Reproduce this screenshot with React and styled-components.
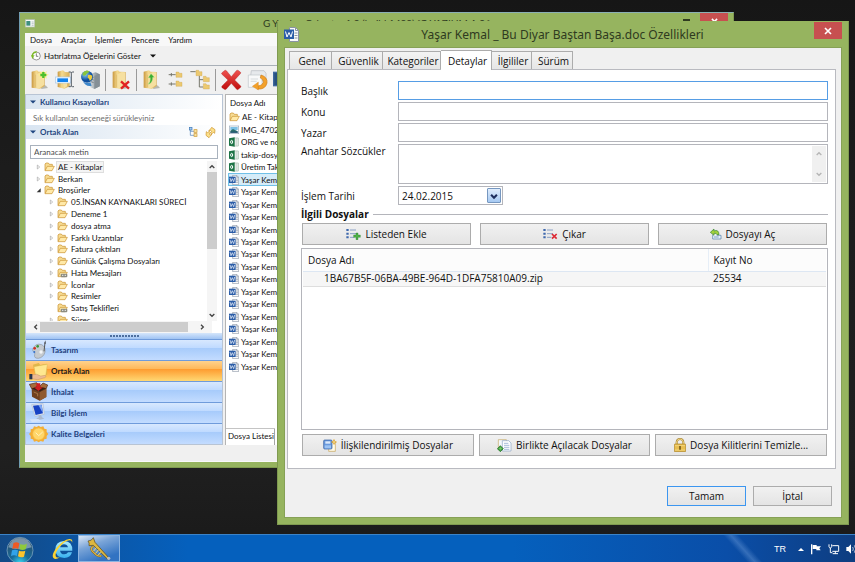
import React from "react";
import styled, { createGlobalStyle, css } from "styled-components";

const GlobalStyle = createGlobalStyle`
  * {
    box-sizing: border-box;
  }
  body {
    margin: 0;
    background: #191919;
    color: #101010;
    font: 10px/12px "Open Sans", "Noto Sans", sans-serif;
  }
  button, input, select, textarea {
    font: inherit;
    color: inherit;
    margin: 0;
  }
  ul {
    list-style: none;
    margin: 0;
    padding: 0;
  }
  svg {
    display: block;
    flex: none;
  }
`;

/* ---------- icons ---------- */

const Folder = ({ shared }) => (
  <svg width="11" height="10" viewBox="0 0 33 30">
    <path d="M3 25V6l3-3h7l3 4h9v6" fill="#f7dc94" stroke="#c98f2c" strokeWidth="2" />
    <path d="M3 26l7-13h21l-7 13z" fill="#ffe9a8" stroke="#c98f2c" strokeWidth="2" />
    {shared && (
      <g>
        <rect x="11" y="17" width="20" height="11" rx="3" fill="#8c8c80" />
        <path d="M15 22h4m4 0h4" stroke="#eee" strokeWidth="3" />
      </g>
    )}
  </svg>
);

const WordDoc = ({ size = 10 }) => (
  <svg width={size} height={size} viewBox="0 0 30 30">
    <path d="M11 1h12l6 6v22H11z" fill="#fafafa" stroke="#8a94a3" strokeWidth="2" />
    <path d="M23 1v6h6M21 12h6M21 17h6M21 22h6" fill="none" stroke="#8a94a3" strokeWidth="2" />
    <rect x="0" y="5" width="20" height="19" fill="#2b5da8" />
    <path d="M3 9l3 11 4-9 4 9 3-11" fill="none" stroke="#fff" strokeWidth="2" />
  </svg>
);

const ExcelDoc = () => (
  <svg width="10" height="10" viewBox="0 0 30 30">
    <path d="M14 3h14v24H14z" fill="#fafafa" stroke="#9bb7a5" strokeWidth="2" />
    <path d="M16 9h12M16 15h12M16 21h12M22 3v24" stroke="#9bb7a5" strokeWidth="1" />
    <path d="M0 4l17-3v28L0 26z" fill="#1c7345" />
    <ellipse cx="8" cy="15" rx="3" ry="5" fill="none" stroke="#fff" strokeWidth="3" />
  </svg>
);

const Picture = () => (
  <svg width="10" height="10" viewBox="0 0 30 30">
    <rect x="1" y="3" width="28" height="23" fill="#fff" stroke="#9ab" strokeWidth="2" />
    <rect x="4" y="6" width="22" height="9" fill="#7ec1e6" />
    <path d="M4 17l8-5 14 7v4H4z" fill="#2c6f6c" />
    <rect x="4" y="20" width="22" height="3" fill="#1d4d70" />
  </svg>
);

const WindowGlyph = () => (
  <svg width="10" height="9" viewBox="0 0 30 27">
    <rect x="1" y="2" width="28" height="22" fill="#f7f9f7" stroke="#b4bfb0" strokeWidth="2" />
    <rect x="4" y="6" width="12" height="14" fill="#3f8f7f" />
    <path d="M20 9h6M20 14h6M20 19h6" stroke="#9aa" strokeWidth="2" />
  </svg>
);

const Clock = () => (
  <svg width="10" height="10" viewBox="0 0 30 30">
    <circle cx="16" cy="15" r="12" fill="#fff" stroke="#666" strokeWidth="2" />
    <path d="M16 7v9h6" fill="none" stroke="#444" strokeWidth="2" />
    <path d="M17 3A12 12 0 0 0 6 22" fill="none" stroke="#7dbb25" strokeWidth="4" />
    <path d="M0 13h11l-6 8z" fill="#7dbb25" />
  </svg>
);

const ToolSvg = ({ children, width = 20 }) => (
  <svg width={width} height="22" viewBox={`0 0 ${width * 3} 66`}>
    <defs>
      <linearGradient id="folderGold" x1="0" x2="1">
        <stop offset="0" stopColor="#c9983f" />
        <stop offset=".35" stopColor="#f5da90" />
        <stop offset="1" stopColor="#d9ae55" />
      </linearGradient>
      <linearGradient id="steel" x1="0" x2="1">
        <stop offset="0" stopColor="#d8dde0" />
        <stop offset="1" stopColor="#6f7a82" />
      </linearGradient>
      <radialGradient id="globe" cx=".35" cy=".3">
        <stop offset="0" stopColor="#8ed1f7" />
        <stop offset="1" stopColor="#0e4f9f" />
      </radialGradient>
      <linearGradient id="redX" x1="0" y1="0" x2="0" y2="1">
        <stop offset="0" stopColor="#ef5350" />
        <stop offset="1" stopColor="#bf0d0d" />
      </linearGradient>
    </defs>
    {children}
  </svg>
);

const StandingFolder = () => (
  <g>
    <path d="M30 42l18 8 6 7-20 3z" fill="#a9a9a0" opacity=".8" />
    <path d="M5 8l16-4 5 4 18 1v42l-14 8-25-3z" fill="url(#folderGold)" />
    <path d="M17 17l15-8 10 1v38l-16 11-9-5z" fill="#f6e0a0" />
    <path d="M17 17v38" stroke="#d9b25c" strokeWidth="2" />
  </g>
);

const NewFolder = () => (
  <ToolSvg>
    <StandingFolder />
    <path
      d="M40 4l3 7 8-5-3 8 9 3-9 4 3 8-8-4-3 8-4-8-8 4 4-8-8-4 8-3-4-8 8 5z"
      fill="#fdf086"
    />
    <path d="M40 9v18M31 18h18" stroke="#4cbf2f" strokeWidth="7" />
  </ToolSvg>
);

const Rename = () => (
  <ToolSvg>
    <path d="M8 8l16-4 6 5 14 1v42l-16 7-20-5z" fill="url(#folderGold)" />
    <path d="M24 40l12-2v14l-10 7z" fill="#f6e0a0" />
    <rect x="1" y="24" width="46" height="18" fill="#f4f9ff" stroke="#a9c8e8" strokeWidth="2" />
    <rect x="7" y="28" width="32" height="11" fill="#1283ef" />
    <path
      d="M41 9h5q3 0 3 4v36q0 4 3 4h5M57 9h-4q-4 0-4 4M41 53h5q3 0 3-4"
      fill="none"
      stroke="#555d66"
      strokeWidth="3"
    />
  </ToolSvg>
);

const GlobeServer = () => (
  <ToolSvg>
    <path d="M30 14l17-4 12 6v36l-16 8-13-6z" fill="url(#steel)" />
    <path d="M43 20l16-4v36l-16 8z" fill="#858f96" />
    <path d="M33 22l8 3M33 30l8 3M33 38l8 3" stroke="#59636b" strokeWidth="2" />
    <circle cx="21" cy="23" r="18" fill="url(#globe)" />
    <path d="M8 12q9-12 20-5-2 6-8 7-3 9-12 5z" fill="#88c43d" />
    <path d="M24 18q9-2 13 3-1 13-8 14-1-7-6-9z" fill="#eccb3d" />
    <path d="M8 36q10 10 23 4l4 10q-17 5-27-14z" fill="#3d86ca" />
  </ToolSvg>
);

const FolderDelete = () => (
  <ToolSvg>
    <StandingFolder />
    <path d="M30 37l24 22M54 37L30 59" stroke="#e12222" strokeWidth="7" />
  </ToolSvg>
);

const FolderMove = () => (
  <ToolSvg>
    <StandingFolder />
    <path
      d="M18 46q8-6 7-20h-6l8-12 10 11h-5q0 18-14 21z"
      fill="#3cae32"
      stroke="#a5e58c"
      strokeWidth="1"
    />
  </ToolSvg>
);

const MiniNode = ({ x, y }) => (
  <path d={`M${x} ${y}h8l2 4h8v12h-18z`} fill="#ecc970" stroke="#c79d45" strokeWidth="1" />
);

const ExpandTree = () => (
  <ToolSvg width={17}>
    <path d="M5 17h21M5 45h21" stroke="#77776c" strokeWidth="3" />
    <path d="M13 12v10M13 40v10" stroke="#77776c" strokeWidth="3" />
    <MiniNode x={27} y={9} />
    <MiniNode x={27} y={36} />
  </ToolSvg>
);

const CollapseTree = () => (
  <ToolSvg width={21}>
    <path d="M4 8h16M31 20v34h12M31 32h12" stroke="#77776c" fill="none" strokeWidth="3" />
    <MiniNode x={21} y={4} />
    <MiniNode x={43} y={22} />
    <MiniNode x={43} y={44} />
  </ToolSvg>
);

const RedX = () => (
  <ToolSvg width={21}>
    <path
      d="M3 11l9-7q3-1 5 2l14 17L46 5q3-2 5-1l7 5q3 3 0 5L41 33l18 18q2 3 0 4l-7 6q-3 2-5 0L31 43 16 60q-3 3-6 1l-7-5q-2-2 0-5l18-18L2 15q-1-2 1-4z"
      fill="url(#redX)"
      stroke="#a51212"
    />
  </ToolSvg>
);

const Restore = () => (
  <ToolSvg width={21}>
    <path d="M13 5h38l6 8v22H9z" fill="#e6e9ec" stroke="#b5bac0" strokeWidth="2" />
    <path d="M4 18h36l5 8v29H4z" fill="#f8f9fa" stroke="#bfc5ca" strokeWidth="2" />
    <path d="M11 30h22M11 37h18" stroke="#c5cbd0" strokeWidth="2" />
    <path
      d="M42 18q20 6 18 24-5 20-28 18v-9q14 0 17-11 1-9-9-13z"
      fill="#f3a12b"
      stroke="#cf7a12"
      strokeWidth="2"
    />
    <path d="M16 52l18-13v24z" fill="#f3a12b" stroke="#cf7a12" strokeWidth="1" />
  </ToolSvg>
);

const BlueStrip = () => (
  <ToolSvg width={15}>
    <rect x="0" y="8" width="45" height="44" fill="#3d679e" />
    <rect x="4" y="12" width="37" height="36" fill="#27507f" />
  </ToolSvg>
);

const Twisty = ({ open, empty }) => (
  <svg width="6" height="8" viewBox="0 0 18 24">
    {!empty &&
      (open ? (
        <path d="M14 7v12H2z" fill="#333" />
      ) : (
        <path d="M4 6l7 6-7 6z" fill="#fff" stroke="#a5a5a5" strokeWidth="2" />
      ))}
  </svg>
);

const Triangle = ({ width = 6, up }) => (
  <svg width={width} height="4" viewBox="0 0 12 8">
    <path d={up ? "M0 8l6-6 6 6z" : "M0 1h12l-6 6z"} fill="currentColor" />
  </svg>
);

const turns = { up: 0, right: 90, down: 180, left: 270 };

const Chevron = ({ to, color = "#444", size = 8, weight = 4 }) => (
  <svg width={size} height={size} viewBox="0 0 24 24">
    <path
      d="M5 15l7-7 7 7"
      fill="none"
      stroke={color}
      strokeWidth={weight}
      transform={`rotate(${turns[to]} 12 12)`}
    />
  </svg>
);

const TreeIcon = () => (
  <svg width="9" height="10" viewBox="0 0 27 30">
    <path d="M4 8v17h11M4 13h11" fill="none" stroke="#4c7fb8" strokeWidth="2" />
    <rect x="1" y="1" width="8" height="8" fill="#a7cbef" stroke="#3b76b5" strokeWidth="2" />
    <rect x="15" y="8" width="9" height="8" fill="#f7e0a0" stroke="#cb952d" strokeWidth="2" />
    <rect x="15" y="20" width="9" height="8" fill="#f7e0a0" stroke="#cb952d" strokeWidth="2" />
  </svg>
);

const SyncIcon = () => (
  <svg width="11" height="11" viewBox="0 0 33 33">
    <path d="M11 12l7-8 2-3 10 7-1 11-4-3-5 5-3-4 3-4-3-3z" fill="#fbe08b" stroke="#cb8f22" strokeWidth="2" />
    <path d="M21 22l-7 7-2 3-9-7 1-11 4 3 5-4 3 4-3 4 3 3z" fill="#fbe08b" stroke="#cb8f22" strokeWidth="2" />
  </svg>
);

const Palette = () => (
  <svg width="20" height="20" viewBox="0 0 60 60">
    <path
      d="M12 26Q20 8 38 14q12 6 10 22-4 16-20 19-14 0-11-11 3-6-4-9-3-3-1-9z"
      fill="#c5cacf"
      stroke="#8f969c"
      strokeWidth="2"
    />
    <circle cx="17" cy="25" r="4" fill="#cf2e24" />
    <circle cx="26" cy="19" r="4" fill="#34983a" />
    <circle cx="16" cy="36" r="3" fill="#3371cc" />
    <circle cx="36" cy="36" r="5" fill="#f3f5f7" />
    <path d="M45 34l3-26" stroke="#555" strokeWidth="3" />
    <path d="M46 10l3-9 1 10z" fill="#222" />
  </svg>
);

const HandFolder = () => (
  <svg width="20" height="20" viewBox="0 0 60 60">
    <path d="M12 11l17-5 5 6 19-4 2 33-35 7z" fill="#e0b74b" />
    <path d="M15 17l40-7-5 34-29 6z" fill="#ffe88f" stroke="#d5ac40" strokeWidth="1" />
    <path
      d="M8 42q16-6 27 3l14-2q5 4-2 7l-21 6-18-3z"
      fill="#edbb92"
      stroke="#b47b50"
      strokeWidth="1"
    />
    <path d="M1 39h9v16H1z" fill="#28364e" />
  </svg>
);

const OpenBox = () => (
  <svg width="20" height="20" viewBox="0 0 60 60">
    <path d="M8 20l24 9v27L9 44zM32 29l20-10v26L32 56z" fill="#704120" />
    <path d="M32 29l20-10v26L32 56z" fill="#8f5a30" />
    <path
      d="M8 20L1 7l22-5 9 11 10-10 14 6-4 10-20 10z"
      fill="#a56b3a"
      stroke="#4c2a15"
      strokeWidth="2"
    />
    <path d="M8 20l17-8 27 7-20 10z" fill="#3c2113" />
    <path d="M22 4h12v12h8L28 27 15 16h7z" fill="#cf2020" />
    <path d="M14 30l12 5v8" fill="none" stroke="#c28f5c" strokeWidth="2" />
  </svg>
);

const Monitor = () => (
  <svg width="20" height="20" viewBox="0 0 60 60">
    <path d="M8 5l34-4 4 33-28 6z" fill="#e1e7ef" stroke="#b4c0d0" strokeWidth="2" />
    <path d="M12 8l26-3 4 26-22 5z" fill="#1742c4" />
    <path d="M28 6l10-1 4 26z" fill="#7fa8f4" />
    <path d="M28 38l8-2 3 7 7 4-18 4-6-5 8-3z" fill="#aab9ce" />
    <path d="M2 49l26-1 10 7-29 3z" fill="#d5e4fa" />
  </svg>
);

const Seal = () => (
  <svg width="20" height="20" viewBox="0 0 60 60">
    <path
      d="M29 5l6 4 8-2 3 7 7 2v8l5 6-5 6v8l-7 2-3 7-8-2-6 4-6-4-8 2-3-7-7-2v-8l-5-6 5-6v-8l7-2 3-7 8 2z"
      fill="#f3ae35"
    />
    <circle cx="29" cy="30" r="18" fill="#ffd76a" stroke="#f5bb45" strokeWidth="2" />
    <path d="M20 26l9 9 12-11" fill="none" stroke="#fff0bd" strokeWidth="3" />
  </svg>
);

const ListIcon = ({ kind }) => (
  <svg width="15" height="12" viewBox="0 0 45 36">
    <path d="M1 6h7M1 17h7M1 28h7" stroke="#3f69ad" strokeWidth="6" />
    <path d="M12 6h18M12 17h18M12 28h13" stroke="#8aa0c4" strokeWidth="3" />
    {kind === "add" ? (
      <path
        d="M30 15h6v6h7v7h-7v7h-6v-7h-7v-7h7z"
        fill="#4eb045"
        stroke="#1d7324"
        strokeWidth="1"
      />
    ) : (
      <path d="M27 18l14 14M41 18L27 32" stroke="#dd2a35" strokeWidth="5" />
    )}
  </svg>
);

const OpenFileIcon = () => (
  <svg width="12" height="12" viewBox="0 0 36 36">
    <path d="M8 20v13h25V22H20" fill="#e6f0fb" stroke="#4c79a8" strokeWidth="2" />
    <path d="M12 27h14" stroke="#4c79a8" strokeWidth="2" />
    <path d="M1 13L12 3v6q14-6 15 11h-6q-2-6-9-4v6z" fill="#a2d13c" stroke="#348232" strokeWidth="2" />
  </svg>
);

const RelatedIcon = () => (
  <svg width="14" height="13" viewBox="0 0 42 39">
    <path d="M19 10h18v27H17z" fill="#fffbe9" stroke="#c6a052" strokeWidth="2" />
    <rect x="2" y="3" width="25" height="27" rx="3" fill="#6b9ade" stroke="#2f5b9d" strokeWidth="2" />
    <rect x="7" y="7" width="15" height="7" fill="#dce9fa" />
    <rect x="5" y="19" width="19" height="9" fill="#9cc3f3" />
    <path d="M33 1v16M25 9h16" stroke="#e1a72c" strokeWidth="3" />
    <circle cx="33" cy="9" r="4" fill="#fff2b0" stroke="#d29420" strokeWidth="2" />
  </svg>
);

const TogetherIcon = () => (
  <svg width="15" height="13" viewBox="0 0 45 39">
    <path d="M4 2h24v29H4z" fill="#f4f7fb" stroke="#c4a860" strokeWidth="2" />
    <path d="M16 5h19l7 7v24H16z" fill="#fdfeff" stroke="#8da5c4" strokeWidth="2" />
    <path d="M21 13h13M21 19h16M21 25h16M21 31h16" stroke="#7e9cc7" strokeWidth="2" />
    <path d="M10 20l9 9-9 9-9-9z" fill="#3b9c39" stroke="#1c6a26" strokeWidth="2" />
    <path d="M10 24v10M5 29h10" stroke="#8ed37a" strokeWidth="2" />
  </svg>
);

const LockIcon = () => (
  <svg width="12" height="14" viewBox="0 0 36 42">
    <path d="M8 20v-8q1-9 10-9t10 9v8" fill="none" stroke="#a88434" strokeWidth="6" />
    <path d="M8 20v-8q1-9 10-9t10 9v8" fill="none" stroke="#efd684" strokeWidth="3" />
    <rect x="1" y="18" width="34" height="23" rx="2" fill="#e8bf50" stroke="#a77c20" strokeWidth="2" />
    <path d="M3 23h30M3 36h30" stroke="#f7e096" strokeWidth="2" />
    <path d="M18 24v11" stroke="#59410f" strokeWidth="4" />
  </svg>
);

const StartOrb = () => (
  <svg width="28" height="28" viewBox="0 0 84 84">
    <defs>
      <radialGradient id="orb" cx=".5" cy="1" r=".9">
        <stop offset="0" stopColor="#3ddcf5" />
        <stop offset=".4" stopColor="#166d9c" />
        <stop offset="1" stopColor="#2a4f6d" />
      </radialGradient>
    </defs>
    <circle cx="42" cy="43" r="39" fill="url(#orb)" stroke="#8cb2cb" strokeWidth="2" />
    <path d="M7 34Q15 6 42 6t35 28Q42 46 7 34z" fill="#c9d6df" opacity=".5" />
    <path d="M22 22q9-6 18 0l-3 17q-9-4-18 0z" fill="#ee5a24" />
    <path d="M43 24q9 5 20-1l-4 17q-9 4-19 0z" fill="#8fc93a" />
    <path d="M18 43q9-4 18 0l-3 17q-9-5-18 0z" fill="#32a3e8" />
    <path d="M39 44q10 4 19 0l-4 18q-9 4-18-1z" fill="#fcc42c" />
  </svg>
);

const ExplorerLogo = () => (
  <svg width="24" height="24" viewBox="0 0 72 72">
    <defs>
      <linearGradient id="ie" x1="0" y1="0" x2="0" y2="1">
        <stop offset="0" stopColor="#aeeaff" />
        <stop offset="1" stopColor="#37b1ef" />
      </linearGradient>
    </defs>
    <path
      d="M64 41H27q2 11 13 11 8 0 11-6h12q-5 17-23 17-27-1-27-26 1-24 26-25 26 1 25 29zM27 31h24q-2-9-12-9t-12 9z"
      fill="url(#ie)"
    />
    <path
      d="M63 18q4-13-8-12Q37 8 18 31-1 55 8 64q6 5 20-4-9 3-12 0-7-8 8-28Q43 10 56 10q7 0 7 8z"
      fill="#fbd232"
    />
  </svg>
);

const Trumpet = () => (
  <svg width="24" height="24" viewBox="0 0 72 72">
    <path
      d="M3 12Q14 12 19 2l5 14 42 47-4 4L19 25 6 26q2-8-3-14z"
      fill="#dcb741"
      stroke="#574414"
      strokeWidth="2"
    />
    <path
      d="M20 28q-12 4-4 15l12 11q9 6 15 2"
      fill="none"
      stroke="#6b5318"
      strokeWidth="6"
    />
    <path
      d="M20 28q-12 4-4 15l12 11q9 6 15 2"
      fill="none"
      stroke="#d8b043"
      strokeWidth="4"
    />
    <path d="M28 32l-8 10M34 39l-8 10M41 46l-8 9" stroke="#f0d878" strokeWidth="3" />
    <circle cx="65" cy="64" r="5" fill="#b7bcc4" />
  </svg>
);

const TrayFlag = () => (
  <svg width="12" height="12" viewBox="0 0 36 36">
    <path d="M5 4v30" stroke="#fff" strokeWidth="4" />
    <path d="M8 6h12v4h13l-5 6 4 6H19v-4H8z" fill="#fff" />
  </svg>
);

const TrayNetwork = () => (
  <svg width="12" height="12" viewBox="0 0 36 36">
    <path d="M13 8h19v17H13" fill="none" stroke="#fff" strokeWidth="3" />
    <path d="M22 25v7M14 32h16" stroke="#fff" strokeWidth="3" />
    <path d="M3 4v7q1 4 4 4t4-4V4M7 15v14h6" fill="none" stroke="#fff" strokeWidth="3" />
  </svg>
);

const TraySound = () => (
  <svg width="12" height="12" viewBox="0 0 36 36">
    <path d="M1 12h6l8-8v28l-8-8H1z" fill="#fff" />
    <path d="M20 12q4 6 0 12M25 7q8 11 0 22" fill="none" stroke="#fff" strokeWidth="2" />
  </svg>
);

const CloseGlyph = ({ size = 8 }) => (
  <svg width={size} height={size} viewBox="0 0 24 24">
    <path d="M3 3l18 18M21 3L3 21" stroke="#fff" strokeWidth="5" />
  </svg>
);

/* ---------- desktop and windows ---------- */

const Desktop = styled.div`
  position: relative;
  min-height: 100vh;
  overflow: hidden;
  display: flex;
  flex-direction: column;
  justify-content: flex-end;
  background: linear-gradient(#161616, #1c1c1c 30%, #202020 80%, #191919);
`;

const Window = styled.section`
  position: absolute;
  background: #96b45f;
  border: 1px solid #7f9a50;
  display: flex;
  flex-direction: column;
`;

const ExplorerWindow = styled(Window)`
  top: 12px;
  left: 19px;
  right: 121px;
  padding: 0 5px 5px;
  border-color: #8bb0b4 #7f9a50 #7f9a50 #6f9bb0;
  font-family: Lato, "Open Sans", sans-serif;
`;

const PropertiesWindow = styled(Window)`
  top: 21px;
  left: 277px;
  right: 6px;
  padding: 0 6px 6px;
  border-top-color: #96b45f;
`;

const TitleBar = styled.header`
  display: flex;
  align-items: center;
  height: ${(p) => p.$height}px;
  color: #2f3b20;
`;

const Title = styled.h1`
  flex: 1;
  margin: 0;
  padding-left: ${(p) => p.$shift || 0}px;
  text-align: center;
  white-space: nowrap;
  font-size: ${(p) => p.$size}px;
  line-height: 16px;
  font-weight: 400;
`;

const PropertiesTitle = styled(Title)`
  font-family: "Noto Sans", sans-serif;
`;

const CaptionButton = styled.button`
  width: 28px;
  height: 17px;
  padding: 0;
  border: 0;
  align-self: flex-start;
  display: grid;
  place-items: center;
  background: ${(p) => (p.$close ? "#c75050" : "transparent")};
`;

const MaxGlyph = styled.span`
  width: 7px;
  height: 6px;
  border: 1px solid #2f3b20;
  border-top-width: 2px;
`;

/* ---------- explorer ---------- */

const ExplorerBody = styled.div`
  background: #f0f0f0;
  font-size: 8px;
`;

const MenuBar = styled.nav`
  display: flex;
  gap: 9px;
  height: 13px;
  padding-left: 5px;
  background: #f8f8f8;
`;

const MenuItem = styled.button`
  padding: 0;
  border: 0;
  background: none;
`;

const ReminderBar = styled.div`
  display: flex;
  align-items: center;
  height: 20px;
  padding-left: 6px;
  border-bottom: 1px solid #a9b0b8;
  background: #f0f0f0;
`;

const ReminderButton = styled.button`
  display: flex;
  align-items: center;
  gap: 3px;
  padding: 0;
  border: 0;
  background: none;
  & > :last-child {
    margin-left: 6px;
  }
`;

const ToolBar = styled.div`
  display: flex;
  align-items: center;
  gap: 5px;
  height: 28px;
  padding-left: 5px;
`;

const Tool = styled.button`
  padding: 0;
  border: 0;
  background: none;
`;

const Divider = styled.span`
  width: 1px;
  height: 22px;
  background: #9a9a9a;
`;

const Split = styled.div`
  display: flex;
  gap: 2px;
  height: 351px;
`;

const Side = styled.div`
  display: flex;
  flex-direction: column;
  width: 198px;
  background: #fff;
  border: 1px solid #b8c4d4;
`;

const SectionHead = styled.h2`
  display: flex;
  align-items: center;
  gap: 4px;
  height: 14px;
  margin: 0;
  padding: 0 6px 0 4px;
  font-size: 8px;
  line-height: 14px;
  color: #1f4680;
  background: linear-gradient(90deg, #d9e5f1, #fff);
  & > svg:nth-of-type(2) {
    margin-left: auto;
  }
  & > svg:nth-of-type(3) {
    margin-left: 3px;
  }
`;

const Hint = styled.p`
  margin: 0;
  padding: 3px 7px 1px;
  height: 16px;
  line-height: 12px;
  color: #6d6d6d;
`;

const Search = styled.input`
  height: 14px;
  margin: 6px 4px 2px;
  padding: 0 3px;
  border: 1px solid #a9b2bd;
  outline: 0;
  &::placeholder {
    color: #4e4e4e;
    opacity: 1;
  }
`;

const TreeBox = styled.div`
  display: flex;
  height: 161px;
  overflow: hidden;
`;

const Tree = styled.ul`
  flex: 1;
  display: grid;
  grid-auto-rows: 1fr;
  height: 165px;
`;

const TreeItem = styled.li`
  display: flex;
  align-items: center;
  gap: 2px;
  padding-left: ${(p) => 10 + p.$level * 13}px;
  white-space: nowrap;
`;

const TreeLabel = styled.span`
  padding: 0 1px;
  line-height: 10px;
  ${(p) =>
    p.$selected &&
    css`
      background: #f4f4f4;
      outline: 1px solid #dedede;
    `}
`;

const ScrollTrack = styled.div`
  display: flex;
  flex-direction: ${(p) => (p.$across ? "row" : "column")};
  align-items: center;
  justify-content: space-between;
  flex: none;
  background: #f5f5f5;
  ${(p) =>
    p.$across
      ? "height: 12px; margin-right: 10px; padding: 0 6px;"
      : "width: 10px; margin-right: 5px; padding: 2px 0;"}
`;

const Thumb = styled.span`
  background: #cdcdcd;
  ${(p) =>
    p.$across
      ? "width: 148px; height: 10px; margin-right: auto;"
      : "height: 77px; width: 10px; margin: 1px 0 auto;"}
`;

const Grip = styled.div`
  display: grid;
  place-items: center;
  height: 6px;
  background: linear-gradient(#d5e6fb, #9fc3f3);
  &::after {
    content: "";
    width: 29px;
    height: 2px;
    background: repeating-linear-gradient(90deg, #4d6f9f 0 2px, transparent 2px 3px);
  }
`;

const NavButton = styled.button`
  display: flex;
  align-items: center;
  gap: 2px;
  height: 21px;
  padding: 0 3px;
  border: 0;
  border-top: 1px solid #6f9bdb;
  font-weight: 700;
  text-align: left;
  color: ${(p) => (p.$active ? "#1a1a1a" : "#1f3f7d")};
  background: ${(p) =>
    p.$active
      ? "linear-gradient(#ffd28c, #ffb858 40%, #fe9d31 42%, #ffd873)"
      : "linear-gradient(#d8e8fe, #bfdaff 40%, #a7cbfb 42%, #c3dcff)"};
`;

const Listing = styled.div`
  flex: 1;
  display: flex;
  flex-direction: column;
  min-width: 0;
  border-left: 1px solid #b4b4b4;
  border-top: 1px solid #b4b4b4;
  background: #fff;
`;

const ListingHead = styled.h2`
  margin: 0;
  padding: 0 4px;
  height: 16px;
  font-size: 8px;
  line-height: 17px;
  font-weight: 400;
`;

const Files = styled.ul`
  display: grid;
  grid-auto-rows: 1fr;
  height: 262px;
  padding-left: 2px;
`;

const File = styled.li`
  display: flex;
  align-items: center;
  gap: 2px;
  padding-left: 1px;
  white-space: nowrap;
  ${(p) =>
    p.$selected &&
    css`
      background: #d5ecf9;
      outline: 1px solid #70c0e7;
      outline-offset: -1px;
    `}
`;

const ListingTab = styled.div`
  margin-top: auto;
  height: 16px;
  width: 49px;
  padding: 0 2px;
  line-height: 15px;
  white-space: nowrap;
  border-right: 1px solid #a5a5a5;
  box-shadow: 0 -1px 0 #c4c4c4;
`;

const StatusBar = styled.footer`
  height: 17px;
  border-bottom: 1px solid #fafafa;
`;

/* ---------- properties dialog ---------- */

const Sheet = styled.div`
  display: flex;
  flex-direction: column;
  padding: 2px 5px 11px 2px;
  background: #f0f0f0;
  border: 1px solid #86a156;
`;

const Tabs = styled.div`
  display: flex;
  align-items: flex-end;
  padding-left: 2px;
`;

const Tab = styled.button`
  position: relative;
  height: ${(p) => (p.$active ? 20 : 18)}px;
  width: ${(p) => p.$width}px;
  margin-bottom: ${(p) => (p.$active ? "-1px" : "0")};
  padding: 0 0 0 3px;
  white-space: nowrap;
  border: 1px solid #acacac;
  border-width: 1px 1px 0 ${(p) => (p.$first ? "1px" : 0)};
  background: ${(p) => (p.$active ? "#fff" : "linear-gradient(#f3f3f3, #e6e6e6)")};
`;

const TabPanel = styled.form`
  display: flex;
  flex-direction: column;
  padding: 11px 7px 12px 13px;
  background: #fff;
  border: 1px solid #b9bac0;
`;

const Fields = styled.div`
  display: grid;
  grid-template-columns: 97px 1fr;
  gap: 2px 0;
`;

const Label = styled.label`
  line-height: 12px;
  padding-top: ${(p) => (p.$top ? 1 : 4)}px;
`;

const boxed = css`
  border: 1px solid #b4b5bb;
  background: #fff;
  outline: 0;
`;

const Input = styled.input`
  ${boxed}
  height: 19px;
  padding: 0 4px;
  &:focus {
    border-color: #569de5;
  }
`;

const TextBox = styled.div`
  ${boxed}
  display: flex;
  height: 40px;
  padding: 1px;
`;

const TextArea = styled.textarea`
  flex: 1;
  border: 0;
  outline: 0;
  resize: none;
`;

const TextScroll = styled.div`
  display: flex;
  flex-direction: column;
  justify-content: space-between;
  padding: 4px 3px;
  background: #f0f0f0;
`;

const DateBox = styled.div`
  ${boxed}
  display: flex;
  align-items: center;
  width: 105px;
  height: 19px;
  padding: 1px;
`;

const DateSelect = styled.select`
  flex: 1;
  appearance: none;
  border: 0;
  padding: 0 2px;
  outline: 0;
  background: none;
`;

const DropArrow = styled.span`
  display: grid;
  place-items: center;
  width: 14px;
  height: 15px;
  border: 1px solid #7697c0;
  border-radius: 1px;
  background: linear-gradient(#e0edfc, #a6c9f2);
`;

const GroupTitle = styled.h2`
  display: flex;
  align-items: center;
  gap: 4px;
  margin: 3px 0 2px;
  font-size: 10px;
  line-height: 13px;
  &::after {
    content: "";
    flex: 1;
    height: 1px;
    background: #b4b5bb;
  }
`;

const ButtonRow = styled.div`
  display: grid;
  grid-template-columns: repeat(3, 1fr);
  gap: ${(p) => p.$gap}px;
  padding: 0 1px;
`;

const Button = styled.button`
  display: flex;
  align-items: center;
  justify-content: center;
  gap: 4px;
  height: ${(p) => p.$height || 22}px;
  padding: 0;
  white-space: nowrap;
  border: 1px solid ${(p) => (p.$primary ? "#3c96f0" : "#acacac")};
  background: linear-gradient(#f1f1f1, #e4e4e4);
`;

const TableFrame = styled.div`
  ${boxed}
  min-height: 182px;
  margin: 3px 0 4px;
  padding: 0 1px;
`;

const Table = styled.table`
  width: 100%;
  border-collapse: collapse;
  th {
    height: 22px;
    padding: 0 5px;
    font-weight: 400;
    text-align: left;
    border-bottom: 1px solid #dde7f3;
    background: #fcfcfc;
  }
  th + th {
    width: 118px;
    border-left: 1px solid #e6eef7;
  }
  td {
    height: 15px;
    padding: 0 5px 1px;
    line-height: 13px;
    background: #f6f6f6;
    border-bottom: 1px solid #dedede;
  }
  td:first-child {
    padding-left: 21px;
  }
`;

const DialogFooter = styled.footer`
  display: grid;
  grid-template-columns: 79px 79px;
  justify-content: end;
  gap: 7px;
  padding: 17px 4px 0 0;
`;

/* ---------- taskbar ---------- */

const TaskBar = styled.footer`
  display: flex;
  align-items: center;
  height: 28px;
  padding-left: 5px;
  border-top: 1px solid #3b83c8;
  color: #fff;
  background:
    linear-gradient(48deg, transparent 32%, rgba(150, 190, 240, 0.3) 36%, transparent 40%) right / 170px 100% no-repeat,
    linear-gradient(90deg, #134a86, #0b57a8 12%, #0560bd 22%, #0560bd 60%, #0a4ea8 85%, #0e3d80);
`;

const Pinned = styled.button`
  display: grid;
  place-items: center;
  width: ${(p) => p.$width}px;
  height: 27px;
  margin-right: ${(p) => p.$gap || 0}px;
  padding: 0;
  border: 1px solid transparent;
  background: none;
  ${(p) =>
    p.$active &&
    css`
      border-color: #8db4e0;
      background: linear-gradient(160deg, #dbe7f5, #7ba5d8 35%, #3273c2 80%);
    `}
`;

const Tray = styled.div`
  display: flex;
  align-items: center;
  gap: 6px;
  margin-left: auto;
  margin-right: -3px;
  font: 9px/12px "Liberation Sans", sans-serif;
  & > :first-child {
    margin-right: 6px;
  }
`;

const tree = [
  { name: "AE - Kitaplar", level: 0, selected: true },
  { name: "Berkan", level: 0 },
  { name: "Broşürler", level: 0, open: true },
  { name: "05.İNSAN KAYNAKLARI SÜRECİ", level: 1 },
  { name: "Deneme 1", level: 1 },
  { name: "dosya atma", level: 1 },
  { name: "Farklı Uzantılar", level: 1 },
  { name: "Fatura çıktıları", level: 1 },
  { name: "Günlük Çalışma Dosyaları", level: 1 },
  { name: "Hata Mesajları", level: 1, shared: true },
  { name: "İconlar", level: 1 },
  { name: "Resimler", level: 1 },
  { name: "Satış Teklifleri", level: 1, shared: true, empty: true },
  { name: "Süreç", level: 1 },
];

const files = [
  { name: "AE - Kitaplar", icon: <Folder /> },
  { name: "IMG_4702.jpg", icon: <Picture /> },
  { name: "ORG ve notlar", icon: <ExcelDoc /> },
  { name: "takip-dosyası", icon: <ExcelDoc /> },
  { name: "Üretim Takip", icon: <ExcelDoc /> },
  ...Array.from({ length: 16 }, (_, i) => ({
    name: "Yaşar Kemal",
    icon: <WordDoc />,
    selected: i === 0,
  })),
];

const areas = [
  { name: "Tasarım", icon: <Palette /> },
  { name: "Ortak Alan", icon: <HandFolder />, active: true },
  { name: "İthalat", icon: <OpenBox /> },
  { name: "Bilgi İşlem", icon: <Monitor /> },
  { name: "Kalite Belgeleri", icon: <Seal /> },
];

const tabs = [
  ["Genel", 43],
  ["Güvenlik", 51],
  ["Kategoriler", 58],
  ["Detaylar", 51],
  ["İlgililer", 40],
  ["Sürüm", 41],
];

const tools = [
  ["Yeni klasör", NewFolder],
  ["Yeniden adlandır", Rename],
  ["Sunucu", GlobeServer],
  null,
  ["Klasörü sil", FolderDelete],
  null,
  ["Taşı", FolderMove],
  ["Genişlet", ExpandTree],
  ["Daralt", CollapseTree],
  null,
  ["Sil", RedX],
  ["Geri al", Restore],
  ["Görünüm", BlueStrip],
];

const Explorer = () => (
  <ExplorerWindow>
    <TitleBar $height={20}>
      <WindowGlyph />
      <Title $size={10} $shift={46}>G Yazılım Orkestra 1.0 (build 1400) [G YAZILIM A.Ş.]</Title>
      <CaptionButton aria-label="Ekranı kapla">
        <MaxGlyph />
      </CaptionButton>
      <CaptionButton $close aria-label="Kapat">
        <CloseGlyph size={7} />
      </CaptionButton>
    </TitleBar>
    <ExplorerBody>
      <MenuBar>
        {["Dosya", "Araçlar", "İşlemler", "Pencere", "Yardım"].map((m) => (
          <MenuItem key={m}>{m}</MenuItem>
        ))}
      </MenuBar>
      <ReminderBar>
        <ReminderButton>
          <Clock />
          Hatırlatma Öğelerini Göster
          <Triangle />
        </ReminderButton>
      </ReminderBar>
      <ToolBar>
        {tools.map((tool, i) => {
          if (!tool) return <Divider key={i} />;
          const [label, Icon] = tool;
          return (
            <Tool key={i} aria-label={label}>
              <Icon />
            </Tool>
          );
        })}
      </ToolBar>
      <Split>
        <Side>
          <SectionHead>
            <Triangle />
            Kullanıcı Kısayolları
          </SectionHead>
          <Hint>Sık kullanılan seçeneği sürükleyiniz</Hint>
          <SectionHead>
            <Triangle />
            Ortak Alan
            <TreeIcon />
            <SyncIcon />
          </SectionHead>
          <Search aria-label="Aranacak metin" placeholder="Aranacak metin" />
          <TreeBox>
            <Tree>
              {tree.map((node) => (
                <TreeItem key={node.name} $level={node.level}>
                  <Twisty open={node.open} empty={node.empty} />
                  <Folder shared={node.shared} />
                  <TreeLabel $selected={node.selected}>{node.name}</TreeLabel>
                </TreeItem>
              ))}
            </Tree>
            <ScrollTrack>
              <Chevron to="up" />
              <Thumb />
              <Chevron to="down" />
            </ScrollTrack>
          </TreeBox>
          <ScrollTrack $across>
            <Chevron to="left" />
            <Thumb $across />
            <Chevron to="right" />
          </ScrollTrack>
          <Grip />
          {areas.map((area) => (
            <NavButton key={area.name} $active={area.active}>
              {area.icon}
              {area.name}
            </NavButton>
          ))}
        </Side>
        <Listing>
          <ListingHead>Dosya Adı</ListingHead>
          <Files>
            {files.map((file, i) => (
              <File key={i} $selected={file.selected}>
                {file.icon}
                {file.name}
              </File>
            ))}
          </Files>
          <ListingTab>Dosya Listesi</ListingTab>
        </Listing>
      </Split>
      <StatusBar />
    </ExplorerBody>
  </ExplorerWindow>
);

const Properties = () => (
  <PropertiesWindow>
    <TitleBar $height={25}>
      <WordDoc size={15} />
      <PropertiesTitle $size={12} $shift={12}>
        Yaşar Kemal _ Bu Diyar Baştan Başa.doc Özellikleri
      </PropertiesTitle>
      <CaptionButton $close aria-label="Kapat">
        <CloseGlyph />
      </CaptionButton>
    </TitleBar>
    <Sheet>
      <Tabs role="tablist">
        {tabs.map(([name, width], i) => (
          <Tab
            key={name}
            role="tab"
            aria-selected={name === "Detaylar"}
            $active={name === "Detaylar"}
            $first={i === 0}
            $width={width}
          >
            {name}
          </Tab>
        ))}
      </Tabs>
      <TabPanel onSubmit={(e) => e.preventDefault()}>
        <Fields>
          <Label htmlFor="title">Başlık</Label>
          <Input id="title" autoFocus />
          <Label htmlFor="subject">Konu</Label>
          <Input id="subject" />
          <Label htmlFor="author">Yazar</Label>
          <Input id="author" />
          <Label htmlFor="keywords" $top>Anahtar Sözcükler</Label>
          <TextBox>
            <TextArea id="keywords" />
            <TextScroll>
              <Chevron to="up" color="#b5b5b5" />
              <Chevron to="down" color="#b5b5b5" />
            </TextScroll>
          </TextBox>
          <Label htmlFor="date">İşlem Tarihi</Label>
          <DateBox>
            <DateSelect id="date" defaultValue="24.02.2015">
              <option>24.02.2015</option>
            </DateSelect>
            <DropArrow>
              <Chevron to="down" color="#1d2d5c" size={10} weight={5} />
            </DropArrow>
          </DateBox>
        </Fields>
        <GroupTitle>İlgili Dosyalar</GroupTitle>
        <ButtonRow $gap={9}>
          <Button type="button">
            <ListIcon kind="add" />
            Listeden Ekle
          </Button>
          <Button type="button">
            <ListIcon kind="remove" />
            Çıkar
          </Button>
          <Button type="button">
            <OpenFileIcon />
            Dosyayı Aç
          </Button>
        </ButtonRow>
        <TableFrame>
          <Table>
            <thead>
              <tr>
                <th>Dosya Adı</th>
                <th>Kayıt No</th>
              </tr>
            </thead>
            <tbody>
              <tr>
                <td>1BA67B5F-06BA-49BE-964D-1DFA75810A09.zip</td>
                <td>25534</td>
              </tr>
            </tbody>
          </Table>
        </TableFrame>
        <ButtonRow $gap={5}>
          <Button type="button">
            <RelatedIcon />
            İlişkilendirilmiş Dosyalar
          </Button>
          <Button type="button">
            <TogetherIcon />
            Birlikte Açılacak Dosyalar
          </Button>
          <Button type="button">
            <LockIcon />
            Dosya Kilitlerini Temizle...
          </Button>
        </ButtonRow>
      </TabPanel>
      <DialogFooter>
        <Button $primary $height={20}>Tamam</Button>
        <Button $height={20}>İptal</Button>
      </DialogFooter>
    </Sheet>
  </PropertiesWindow>
);

export default function App() {
  return (
    <Desktop>
      <GlobalStyle />
      <Explorer />
      <Properties />
      <TaskBar>
        <Pinned $width={28} $gap={15} aria-label="Başlat">
          <StartOrb />
        </Pinned>
        <Pinned $width={30} aria-label="Internet Explorer">
          <ExplorerLogo />
        </Pinned>
        <Pinned $width={42} $active aria-label="Orkestra">
          <Trumpet />
        </Pinned>
        <Tray>
          <span>TR</span>
          <Triangle up />
          <TrayFlag />
          <TrayNetwork />
          <TraySound />
        </Tray>
      </TaskBar>
    </Desktop>
  );
}
